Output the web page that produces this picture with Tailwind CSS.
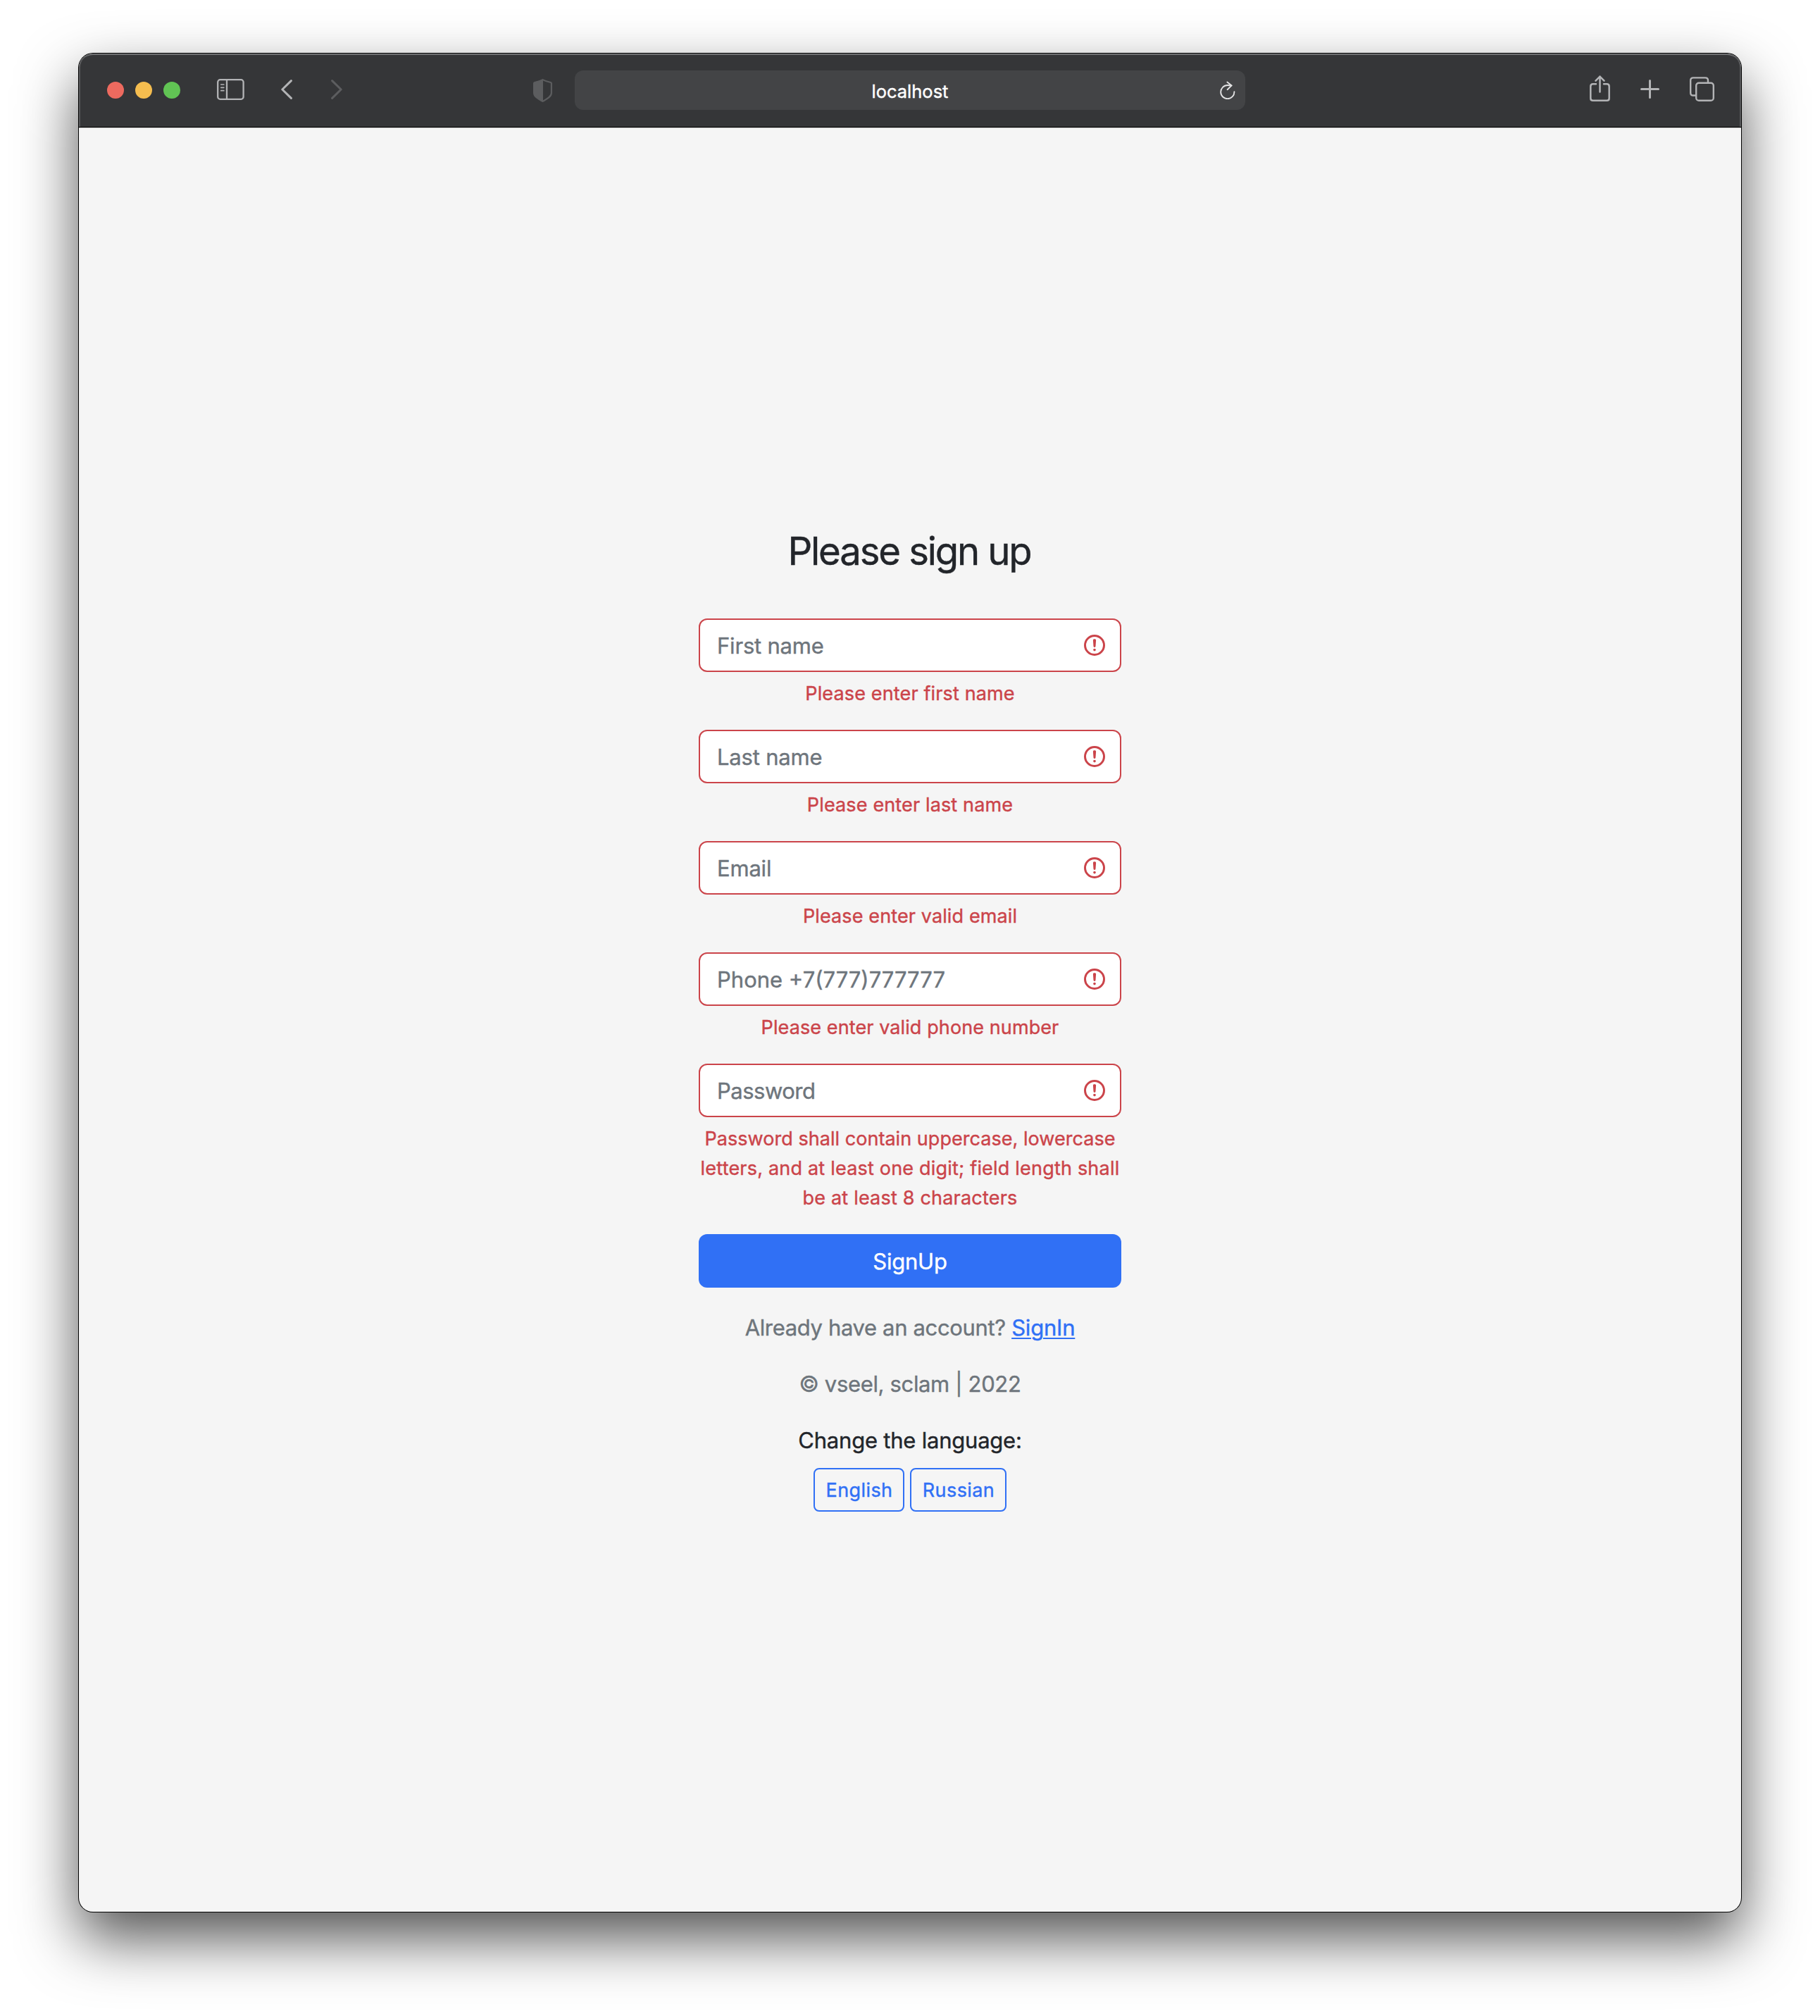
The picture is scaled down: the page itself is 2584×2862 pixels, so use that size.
<!DOCTYPE html>
<html lang="en">
<head>
<meta charset="utf-8">
<title>Sign up</title>
<script src="https://cdn.jsdelivr.net/npm/@tailwindcss/browser@4"></script>
</head>
<body class="h-[2862px] overflow-hidden bg-white px-28 pt-19 font-['Inter',sans-serif] [-webkit-text-stroke:0.4px]">

<div class="flex h-[2638px] w-[2360px] flex-col overflow-hidden rounded-[20px] bg-[#f5f5f5] shadow-[0_0_0_1px_#000,0_38px_84px_rgba(0,0,0,0.68)]">

  <!-- Browser toolbar -->
  <header class="flex h-[105px] shrink-0 items-center rounded-t-[20px] border-b border-black bg-[#353638] pr-[38px] pl-10 shadow-[inset_2px_0_0_#58595b,inset_-2px_0_0_#58595b,inset_0_2px_0_#717274,0_1px_0_#c4c4c4]">
    <div class="flex gap-4">
      <span class="size-6 rounded-full bg-[#ed6a5f]"></span>
      <span class="size-6 rounded-full bg-[#f5bd4f]"></span>
      <span class="size-6 rounded-full bg-[#61c454]"></span>
    </div>
    <svg class="mb-0.5 ml-[52px] h-[30px] w-[39px]" viewBox="0 0 39 30" fill="none" stroke="#b3b4b6" stroke-width="2.3" stroke-linecap="round">
      <rect x="1.2" y="1.2" width="36.4" height="27.6" rx="3.4"/>
      <path d="M14 1.5v27"/>
      <path d="M5.8 8h4M5.8 12.3h4M5.8 16.7h4" stroke-width="1.7"/>
    </svg>
    <svg class="mb-0.5 ml-[52px] h-7 w-4" viewBox="0 0 16 28" fill="none" stroke="#b3b4b6" stroke-width="3" stroke-linecap="round" stroke-linejoin="round"><path d="M14.4 1.6 1.8 14l12.6 12.4"/></svg>
    <svg class="mb-0.5 ml-[55px] h-7 w-4" viewBox="0 0 16 28" fill="none" stroke="#5c5d5f" stroke-width="3" stroke-linecap="round" stroke-linejoin="round"><path d="M1.6 1.6 14.2 14 1.6 26.4"/></svg>
    <svg class="ml-[271px] h-[33px] w-[27px]" viewBox="0 0 27 33">
      <path d="M13.5 1.1c3.6 2 7.4 3 11.3 3.9.7.2 1.1.5 1.1 1.2V20c0 5.5-7 8.8-12.4 11.9C8.1 28.8 1.1 25.5 1.1 20V6.2c0-.7.4-1 1.1-1.2C6.1 4.1 9.9 3.1 13.5 1.1Z" fill="none" stroke="#5c5d5f" stroke-width="2.2"/>
      <path d="M14 1v31C8.5 29 1 25.5 1 20V5.5C6 4.3 10 3 14 1Z" fill="#5c5d5f"/>
    </svg>
    <div class="ml-8 flex h-14 w-[952px] items-center rounded-xl bg-[#434446] pr-3.5 pl-9">
      <span class="flex-1 pt-[3px] text-center text-[25.5px] leading-8 text-white">localhost</span>
      <svg class="h-[26px] w-[22px]" viewBox="0 0 22 26" fill="none" stroke="#e2e2e3" stroke-width="1.9" stroke-linecap="round" stroke-linejoin="round">
        <path d="M20.4 15.3A9.6 9.6 0 1 1 10.8 6c2 0 4 .1 5.7.5"/>
        <path d="M10.4 1.5 16.6 6.4l-6 5.8"/>
      </svg>
    </div>
    <svg class="mb-1 ml-auto h-[38px] w-[29px]" viewBox="0 0 29 38" fill="none" stroke="#b3b4b6" stroke-width="2.5" stroke-linecap="round" stroke-linejoin="round">
      <path d="M9 12.3H4.7Q1.3 12.3 1.3 15.7V32.4Q1.3 35.8 4.7 35.8H24.3Q27.7 35.8 27.7 32.4V15.7Q27.7 12.3 24.3 12.3H20"/>
      <path d="M14.5 23.5V1.6M8.5 7.6l6-6 6 6"/>
    </svg>
    <svg class="mb-[3px] ml-[43px] size-[27px]" viewBox="0 0 27 27" fill="none" stroke="#b3b4b6" stroke-width="3" stroke-linecap="round"><path d="M13.5 1.5v24M1.5 13.5h24"/></svg>
    <svg class="mb-[3px] ml-[43px] h-[35px] w-[35px]" viewBox="0 0 35 35" fill="none" stroke="#b3b4b6" stroke-width="2.4">
      <rect x="9.2" y="8.7" width="24.6" height="25" rx="3.8"/>
      <path d="M8.5 26.5H5Q1.2 26.5 1.2 22.7V5.2Q1.2 1.4 5 1.4H22.2Q26 1.4 26 5.2V8"/>
    </svg>
  </header>

  <!-- Sign-up form -->
  <main class="mx-auto w-[600px] pt-[568px] text-center text-[31px] leading-12 text-[#22252a]">
    <h1 class="mb-[62px] pr-0.5 text-[54.5px] leading-[67px] tracking-[-2.15px]">Please sign up</h1>

    <form>
      <div class="relative">
        <input placeholder="First name" class="block h-19 w-full rounded-xl border-2 border-[#cb444a] bg-white px-6 tracking-[-0.2px] placeholder:text-[#6e757c]">
        <svg class="absolute top-5 right-5 size-9" viewBox="0 0 12 12" fill="none" stroke="#cb444a"><circle cx="6" cy="6" r="4.5"/><path stroke-linejoin="round" d="M5.8 3.6h.4L6 6.5z"/><circle cx="6" cy="8.2" r=".6" fill="#cb444a" stroke="none"/></svg>
      </div>
      <p class="mt-2.5 mb-[30px] text-[27px] leading-[42px] tracking-[0.14px] text-[#cb444a]">Please enter first name</p>

      <div class="relative">
        <input placeholder="Last name" class="block h-19 w-full rounded-xl border-2 border-[#cb444a] bg-white px-6 tracking-[-0.2px] placeholder:text-[#6e757c]">
        <svg class="absolute top-5 right-5 size-9" viewBox="0 0 12 12" fill="none" stroke="#cb444a"><circle cx="6" cy="6" r="4.5"/><path stroke-linejoin="round" d="M5.8 3.6h.4L6 6.5z"/><circle cx="6" cy="8.2" r=".6" fill="#cb444a" stroke="none"/></svg>
      </div>
      <p class="mt-2.5 mb-[30px] text-[27px] leading-[42px] tracking-[0.14px] text-[#cb444a]">Please enter last name</p>

      <div class="relative">
        <input placeholder="Email" class="block h-19 w-full rounded-xl border-2 border-[#cb444a] bg-white px-6 tracking-[-0.2px] placeholder:text-[#6e757c]">
        <svg class="absolute top-5 right-5 size-9" viewBox="0 0 12 12" fill="none" stroke="#cb444a"><circle cx="6" cy="6" r="4.5"/><path stroke-linejoin="round" d="M5.8 3.6h.4L6 6.5z"/><circle cx="6" cy="8.2" r=".6" fill="#cb444a" stroke="none"/></svg>
      </div>
      <p class="mt-2.5 mb-[30px] text-[27px] leading-[42px] tracking-[0.12px] text-[#cb444a]">Please enter valid email</p>

      <div class="relative">
        <input placeholder="Phone +7(777)777777" class="block h-19 w-full rounded-xl border-2 border-[#cb444a] bg-white px-6 placeholder:text-[#6e757c]">
        <svg class="absolute top-5 right-5 size-9" viewBox="0 0 12 12" fill="none" stroke="#cb444a"><circle cx="6" cy="6" r="4.5"/><path stroke-linejoin="round" d="M5.8 3.6h.4L6 6.5z"/><circle cx="6" cy="8.2" r=".6" fill="#cb444a" stroke="none"/></svg>
      </div>
      <p class="mt-2.5 mb-[30px] text-[27px] leading-[42px] tracking-[0.1px] text-[#cb444a]">Please enter valid phone number</p>

      <div class="relative">
        <input placeholder="Password" class="block h-19 w-full rounded-xl border-2 border-[#cb444a] bg-white px-6 tracking-[-0.5px] placeholder:text-[#6e757c]">
        <svg class="absolute top-5 right-5 size-9" viewBox="0 0 12 12" fill="none" stroke="#cb444a"><circle cx="6" cy="6" r="4.5"/><path stroke-linejoin="round" d="M5.8 3.6h.4L6 6.5z"/><circle cx="6" cy="8.2" r=".6" fill="#cb444a" stroke="none"/></svg>
      </div>
      <p class="mt-2.5 mb-[30px] text-[27px] leading-[42px] tracking-[0.2px] text-[#cb444a]"><span class="tracking-[0.04px]">Password shall contain uppercase, lowercase</span><br>letters, and at least one digit; field length shall<br>be at least 8 characters</p>

      <button type="button" class="block h-19 w-full rounded-xl bg-[#3070f5] pt-px tracking-[-0.22px] text-white">SignUp</button>
    </form>

    <p class="mt-[33px] tracking-[-0.35px] text-[#6e757c]">Already have an account? <a class="tracking-[-0.2px] text-[#3070f5] underline decoration-2 underline-offset-[3px]">SignIn</a></p>
    <p class="mt-8 tracking-[-0.35px] text-[#6e757c]">© vseel, sclam | 2022</p>
    <p class="mt-8 tracking-[-0.22px]">Change the language:</p>
    <div class="mt-[15px] flex justify-center gap-2 text-[27px] leading-[42px] tracking-[0.4px] text-[#3070f5]">
      <button type="button" class="h-[62px] w-[129px] rounded-lg border-2 border-[#3070f5] pt-0.5 pl-px">English</button>
      <button type="button" class="h-[62px] w-[137px] rounded-lg border-2 border-[#3070f5] pt-0.5 pl-px">Russian</button>
    </div>
  </main>
</div>

</body>
</html>
